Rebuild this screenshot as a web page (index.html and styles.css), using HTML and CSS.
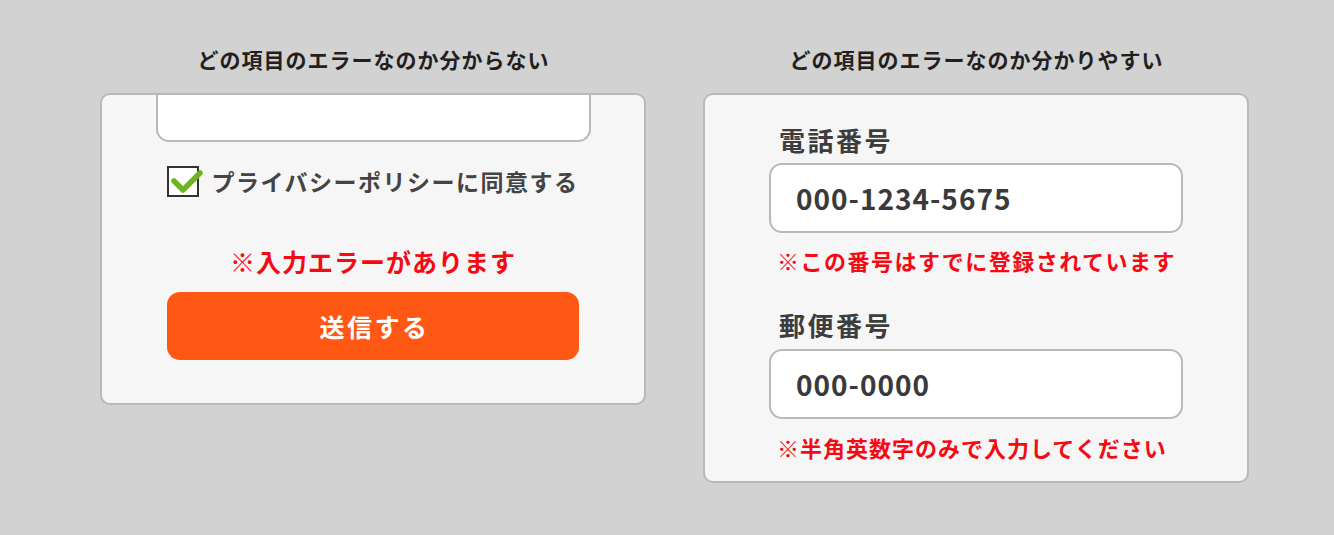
FILE: index.html
```html
<!DOCTYPE html>
<html lang="ja">
<head>
<meta charset="utf-8">
<link rel="stylesheet" href="styles.css">
</head>
<body>
<div class="page">
  <section class="col">
    <h2 class="title">どの項目のエラーなのか分からない</h2>
    <div class="card card-bad">
      <div class="cut-input"></div>
      <label class="agree">
        <span class="box">
          <svg class="check" width="40" height="34" viewBox="0 0 40 34"><polyline points="7,15 16,24 33,7" fill="none" stroke="#6db41f" stroke-width="5.5" stroke-linecap="round" stroke-linejoin="round"/></svg>
        </span>
        <span class="agree-text">プライバシーポリシーに同意する</span>
      </label>
      <p class="err err-center">※入力エラーがあります</p>
      <button class="submit">送信する</button>
    </div>
  </section>
  <section class="col">
    <h2 class="title">どの項目のエラーなのか分かりやすい</h2>
    <div class="card card-good">
      <div class="label">電話番号</div>
      <div class="field">000-1234-5675</div>
      <p class="err err-field">※この番号はすでに登録されています</p>
      <div class="label label-2">郵便番号</div>
      <div class="field field-2">000-0000</div>
      <p class="err err-field err-2">※半角英数字のみで入力してください</p>
    </div>
  </section>
</div>
</body>
</html>
```
FILE: styles.css
```css
* { box-sizing: border-box; }
html, body { margin: 0; padding: 0; }
body {
  background: #d2d2d2;
  width: 1334px;
  height: 535px;
  overflow: hidden;
  font-family: "Noto Sans CJK JP", "Noto Sans", sans-serif;
}
.page {
  display: flex;
  gap: 57px;
  padding: 47px 0 0 100px;
}
.col {
  width: 546px;
  display: flex;
  flex-direction: column;
  align-items: center;
}
.title {
  margin: 0 0 22px;
  font-size: 21px;
  line-height: 24px;
  font-weight: 700;
  letter-spacing: 1px;
  color: #231f20;
  text-indent: 1px;
}
.card {
  width: 546px;
  background: #f6f6f6;
  border: 2px solid #b9b9b9;
  border-radius: 10px;
  display: flex;
  flex-direction: column;
  align-items: center;
}
.card-bad { height: 312px; }
.card-good { height: 390px; align-items: stretch; padding: 30px 64px 0; }

.cut-input {
  width: 435px;
  height: 47px;
  background: #fff;
  border: 2px solid #b9b9b9;
  border-top: none;
  border-radius: 0 0 13px 13px;
}
.agree {
  display: flex;
  align-items: center;
  gap: 12px;
  margin-top: 24px;
  height: 31px;
}
.box {
  position: relative;
  width: 32px;
  height: 31px;
  border: 2px solid #333;
  background: #fff;
}
.check {
  position: absolute;
  left: -2px;
  top: -2px;
  overflow: visible;
}
.agree-text {
  font-size: 23px;
  line-height: 31px;
  font-weight: 700;
  letter-spacing: 1.5px;
  color: #444;
}
.err {
  margin: 0;
  color: #f50a14;
  font-weight: 700;
}
.err-center {
  margin-top: 49px;
  font-size: 25px;
  line-height: 30px;
  letter-spacing: 1px;
}
.submit {
  margin-top: 16px;
  width: 412px;
  height: 68px;
  border: none;
  border-radius: 13px;
  background: #ff5714;
  color: #fff;
  font-family: inherit;
  font-size: 25px;
  font-weight: 700;
  letter-spacing: 2.5px;
  padding: 0 0 0 3px;
}

.label {
  margin-left: 10px;
  font-size: 26px;
  line-height: 30px;
  font-weight: 700;
  letter-spacing: 2.5px;
  color: #3d3d3d;
}
.label-2 { margin-top: 36px; }
.field {
  margin-top: 8px;
  height: 70px;
  background: #fff;
  border: 2px solid #b9b9b9;
  border-radius: 13px;
  padding-left: 25px;
  display: flex;
  align-items: center;
  font-size: 28px;
  font-weight: 700;
  letter-spacing: 1px;
  color: #3a3a3a;
}
.field-2 { margin-top: 9px; }
.err-field {
  margin-top: 13px;
  margin-left: 8px;
  font-size: 22px;
  line-height: 28px;
  letter-spacing: 1.5px;
}
.err-2 { margin-top: 14px; letter-spacing: 1px; }
```
